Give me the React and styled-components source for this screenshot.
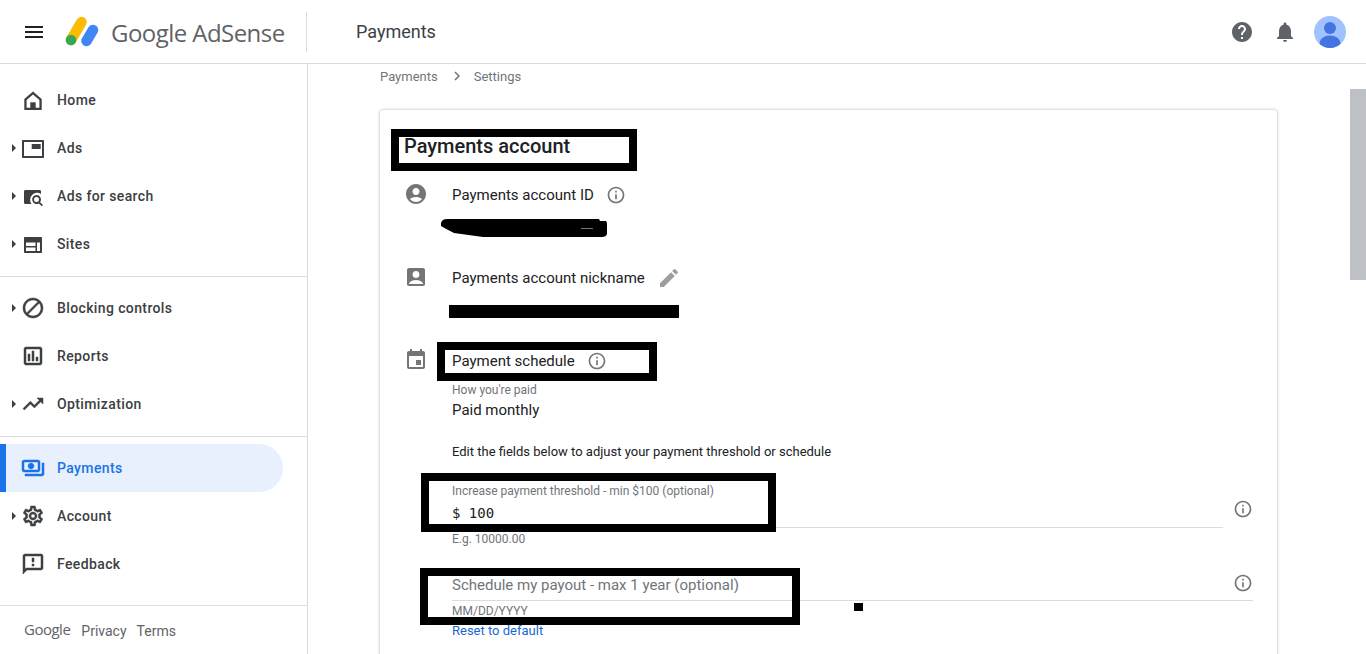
import React from 'react';
import styled, { createGlobalStyle } from 'styled-components';
import {
  MdMenu, MdBlock, MdOutlineAssessment, MdTrendingUp,
  MdOutlinePayments, MdOutlineSettings, MdOutlineFeedback, MdAccountCircle, MdAccountBox, MdEdit,
  MdEvent, MdInfoOutline, MdHelp, MdNotifications, MdChevronRight,
} from 'react-icons/md';

const GlobalStyle = createGlobalStyle`
  html, body {
    margin: 0;
    height: 100%;
    overflow: hidden;
    background: #fff;
    font-family: Roboto, 'Liberation Sans', sans-serif;
  }
`;

const Page = styled.div`
  position: relative;
  height: 100vh;
  display: flex;
  flex-direction: column;
  overflow: hidden;
`;

const Header = styled.header`
  flex: none;
  height: 64px;
  box-sizing: border-box;
  border-bottom: 1px solid #dadce0;
  display: flex;
  align-items: center;
  padding-right: 20px;
`;

const MenuButton = styled.div`
  display: flex;
  margin-left: 22px;
  color: #202124;
`;

const Brand = styled.div`
  width: 243px;
  height: 40px;
  margin-left: 18px;
  box-sizing: border-box;
  border-right: 1px solid #dadce0;
  display: flex;
  align-items: center;
  gap: 11px;
`;

const BrandText = styled.span`
  margin-top: 1px;
  font-family: 'Open Sans', Roboto, sans-serif;
  font-size: 24px;
  color: #5f6368;
  letter-spacing: -0.55px;
  white-space: nowrap;
`;

const PageTitle = styled.div`
  flex: 1;
  margin-left: 49px;
  font-size: 18px;
  color: #3c4043;
`;

const HeaderActions = styled.div`
  display: flex;
  align-items: center;
  color: #5f6368;
  gap: 19px;
`;

const Avatar = styled.svg`
  width: 32px;
  height: 32px;
  margin-left: -2px;
`;

const Body = styled.div`
  flex: 1;
  display: flex;
  min-height: 0;
`;

const Sidebar = styled.nav`
  flex: none;
  width: 308px;
  box-sizing: border-box;
  border-right: 1px solid #dadce0;
  display: flex;
  flex-direction: column;
`;

const NavGroup = styled.div`
  padding: ${p => p.$top}px 0 ${p => p.$bottom}px;
  border-bottom: 1px solid #dadce0;
`;

const NavItem = styled.div`
  position: relative;
  width: 283px;
  height: 48px;
  box-sizing: border-box;
  display: flex;
  align-items: center;
  gap: 12px;
  padding-left: ${p => (p.$active ? 15 : 21)}px;
  border-left: ${p => (p.$active ? '6px solid #1a73e8' : 'none')};
  border-radius: 0 24px 24px 0;
  background: ${p => (p.$active ? '#e8f0fe' : 'transparent')};
  color: ${p => (p.$active ? '#1a73e8' : '#3c4043')};
  font-size: 14px;
  font-weight: 500;
  letter-spacing: 0.38px;
`;

// the reference icons are a little heavier than the stock material ones
const BoldIcon = styled.span`
  display: flex;
  svg path:not([fill='none']) {
    stroke: currentColor;
    stroke-width: 0.5px;
  }
`;

const Caret = styled.span`
  position: absolute;
  left: 12px;
  top: 50%;
  margin-top: -4px;
  border-left: 4px solid #3c4043;
  border-top: 4px solid transparent;
  border-bottom: 4px solid transparent;
`;

const SideFooter = styled.div`
  display: flex;
  align-items: center;
  padding: 17px 0 0 24px;
  color: #5f6368;
  font-size: 14px;
`;

const FooterLogo = styled.span`
  font-family: 'Open Sans', Roboto, sans-serif;
  font-size: 15px;
  letter-spacing: -0.5px;
  margin: -5px 11px 0 0;
`;

const FooterLink = styled.span`
  margin-right: 10px;
`;

const Main = styled.main`
  flex: 1;
  min-width: 0;
  padding: 2px 0 0 72px;
`;

const Breadcrumb = styled.div`
  height: 20px;
  display: flex;
  align-items: center;
  font-size: 13px;
  color: #70757a;
  gap: 10px;
  svg {
    margin-right: -2px;
  }
`;

const Card = styled.section`
  width: 897px;
  height: 700px;
  margin-top: 24px;
  box-sizing: border-box;
  border-radius: 3px;
  box-shadow: 0 0 3px rgba(60, 64, 67, 0.45);
  padding: 22px 0 0 24px;
`;

const CardTitle = styled.h2`
  margin: 0;
  font-size: 20px;
  line-height: 28px;
  font-weight: 500;
  color: #202124;
`;

const Section = styled.div`
  display: grid;
  grid-template-columns: 48px 1fr;
  margin-top: ${p => p.$top}px;
`;

const SectionIcon = styled.div`
  display: flex;
  color: #757575;
`;

const SectionHead = styled.div`
  height: 24px;
  box-sizing: border-box;
  padding-top: 1px;
  display: flex;
  align-items: center;
  gap: 12px;
  font-size: 15px;
  color: #202124;
`;

const InfoIcon = styled(MdInfoOutline)`
  flex: none;
  color: #757575;
`;

const EditIcon = styled(MdEdit)`
  flex: none;
  color: #9e9e9e;
`;

const Redacted = styled.svg`
  display: block;
  margin: ${p => p.$top}px 0 0 ${p => p.$left}px;
`;

const HiddenBar = styled.div`
  width: 230px;
  height: 13px;
  margin: 16px 0 0 -3px;
  background: #000;
`;

const SmallLabel = styled.div`
  margin-top: ${p => p.$top}px;
  font-size: 12px;
  line-height: 16px;
  color: #70757a;
`;

const BodyText = styled.div`
  margin-top: ${p => p.$top}px;
  font-size: ${p => p.$size}px;
  line-height: 20px;
  color: #202124;
`;

const FieldRow = styled.div`
  display: flex;
  align-items: flex-end;
  gap: 10px;
  margin-top: ${p => p.$top}px;
`;

const Field = styled.div`
  width: 771px;
  padding-bottom: 4px;
  border-bottom: 1px solid #dadce0;
`;

const AmountInput = styled.div`
  margin-top: 4px;
  font-family: 'DejaVu Sans Mono', monospace;
  font-size: 14px;
  line-height: 20px;
  color: #202124;
`;

const InfoSlot = styled.div`
  display: flex;
  margin-bottom: 9px;
`;

const PayoutField = styled.div`
  width: 801px;
  margin-top: 28px;
  height: 26px;
  box-sizing: border-box;
  border-bottom: 1px solid #dadce0;
  display: flex;
  justify-content: space-between;
`;

const PayoutLabel = styled.span`
  font-size: 15px;
  line-height: 20px;
  color: #70757a;
`;

const PayoutInfo = styled.div`
  display: flex;
  margin-top: -2px;
`;

const ResetLink = styled.a`
  display: block;
  margin-top: 4px;
  font-size: 13px;
  line-height: 16px;
  color: #1a67d2;
`;

// marker boxes someone drew on top of the screenshot
const Marker = styled.div`
  position: absolute;
  left: ${p => p.$x}px;
  top: ${p => p.$y}px;
  width: ${p => p.$w}px;
  height: ${p => p.$h}px;
  box-sizing: border-box;
  border: 8px solid #000;
  pointer-events: none;
`;

const Speck = styled.div`
  position: absolute;
  left: 854px;
  top: 603px;
  width: 9px;
  height: 8px;
  background: #000;
`;

const ScrollThumb = styled.div`
  position: absolute;
  right: 0;
  top: 89px;
  width: 16px;
  height: 191px;
  background: #bdc1c6;
`;

const HomeIcon = () => (
  <svg width="24" height="24" viewBox="0 0 24 24" fill="currentColor">
    <path fillRule="evenodd" d="M12 3.500l8.700 7.500V22H3.300V11L12 3.500zm0 3.100l-6.400 5.500V19.800h12.800v-7.700L12 6.600z" />
    <path d="M9.300 14.300h5.400V20H9.300z" />
  </svg>
);

const AdsIcon = () => (
  <svg width="24" height="24" viewBox="0 0 24 24" fill="currentColor">
    <path fillRule="evenodd" d="M2 4h20c.6 0 1 .4 1 1v16c0 .6-.4 1-1 1H2c-.6 0-1-.4-1-1V5c0-.6.4-1 1-1zm1 2v14h18V6H3z" />
    <path d="M10.700 8h9v5h-9z" />
  </svg>
);

const SearchAdsIcon = () => (
  <svg width="24" height="24" viewBox="0 0 24 24" fill="currentColor">
    <path d="M4.500 6h14c1 0 1.500.7 1.500 1.500V10a7 7 0 0 0-9.500 10H4.500C3.500 20 3 19.300 3 18.500v-11C3 6.700 3.500 6 4.500 6z" />
    <path fillRule="evenodd" d="M15.500 11a4.500 4.500 0 0 1 3.600 7.200l2.900 2.900-1.200 1.200-2.900-2.900a4.500 4.500 0 1 1-2.400-8.400zm0 2a2.500 2.500 0 1 0 0 5 2.500 2.500 0 0 0 0-5z" />
  </svg>
);

const SitesIcon = () => (
  <svg width="24" height="24" viewBox="0 0 24 24" fill="currentColor">
    <path fillRule="evenodd" d="M4 5h16c.6 0 1 .4 1 1v14c0 .6-.4 1-1 1H4c-.6 0-1-.4-1-1V6c0-.6.4-1 1-1zm1 5.500V14h9.500v-3.500H5zm0 5V19h9.500v-3.500H5zm11-5V19h3v-8.500h-3z" />
  </svg>
);

const navTop = [
  { label: 'Home', icon: <HomeIcon /> },
  { label: 'Ads', icon: <AdsIcon />, caret: true },
  { label: 'Ads for search', icon: <SearchAdsIcon />, caret: true },
  { label: 'Sites', icon: <SitesIcon />, caret: true },
];

const navMiddle = [
  { label: 'Blocking controls', icon: <BoldIcon><MdBlock size={24} /></BoldIcon>, caret: true },
  { label: 'Reports', icon: <BoldIcon><MdOutlineAssessment size={24} /></BoldIcon> },
  { label: 'Optimization', icon: <BoldIcon><MdTrendingUp size={24} /></BoldIcon>, caret: true },
];

const navBottom = [
  { label: 'Payments', icon: <BoldIcon><MdOutlinePayments size={24} /></BoldIcon>, active: true },
  { label: 'Account', icon: <BoldIcon><MdOutlineSettings size={24} /></BoldIcon>, caret: true },
  { label: 'Feedback', icon: <BoldIcon><MdOutlineFeedback size={24} /></BoldIcon> },
];

const renderNav = items =>
  items.map(item => (
    <NavItem key={item.label} $active={item.active}>
      {item.caret && <Caret />}
      {item.icon}
      {item.label}
    </NavItem>
  ));

export default function App() {
  return (
    <Page>
      <GlobalStyle />
      <Header>
        <MenuButton><MdMenu size={24} /></MenuButton>
        <Brand>
          <svg width="36" height="36" viewBox="0 0 36 36">
            <line x1="17.500" y1="8" x2="7" y2="26" stroke="#fbbc04" strokeWidth="10.500" strokeLinecap="round" />
            <line x1="29" y1="16" x2="22.500" y2="27" stroke="#4285f4" strokeWidth="10.500" strokeLinecap="round" />
            <circle cx="7" cy="26" r="5.300" fill="#34a853" />
          </svg>
          <BrandText>Google AdSense</BrandText>
        </Brand>
        <PageTitle>Payments</PageTitle>
        <HeaderActions>
          <MdHelp size={24} />
          <MdNotifications size={24} />
          <Avatar viewBox="0 0 32 32">
            <defs>
              <clipPath id="avatar-clip"><circle cx="16" cy="16" r="16" /></clipPath>
            </defs>
            <circle cx="16" cy="16" r="16" fill="#a0c3ff" />
            <g clipPath="url(#avatar-clip)" fill="#4374e0">
              <circle cx="16" cy="12" r="6" />
              <ellipse cx="16" cy="27" rx="10.500" ry="7.500" />
            </g>
          </Avatar>
        </HeaderActions>
      </Header>
      <Body>
        <Sidebar>
          <NavGroup $top={12} $bottom={8}>{renderNav(navTop)}</NavGroup>
          <NavGroup $top={7} $bottom={8}>{renderNav(navMiddle)}</NavGroup>
          <NavGroup $top={7} $bottom={17}>{renderNav(navBottom)}</NavGroup>
          <SideFooter>
            <FooterLogo>Google</FooterLogo>
            <FooterLink>Privacy</FooterLink>
            <FooterLink>Terms</FooterLink>
          </SideFooter>
        </Sidebar>
        <Main>
          <Breadcrumb>
            Payments
            <MdChevronRight size={18} />
            Settings
          </Breadcrumb>
          <Card>
            <CardTitle>Payments account</CardTitle>
            <Section $top={22}>
              <SectionIcon><MdAccountCircle size={24} /></SectionIcon>
              <div>
                <SectionHead>Payments account ID <InfoIcon size={20} /></SectionHead>
                <Redacted $top={11} $left={-12} width="168" height="21" viewBox="0 0 168 21">
                  <path d="M1 6Q2 2 7 2L159 2L160 4L166 4Q167 5 167 7L167 17Q166 20 162 20L43 20L14 16Q6 12 1 9Z" fill="#000" />
                  <rect x="141" y="11" width="12" height="1" fill="#777" />
                </Redacted>
              </div>
            </Section>
            <Section $top={27}>
              <SectionIcon><MdAccountBox size={24} /></SectionIcon>
              <div>
                <SectionHead>Payments account nickname <EditIcon size={24} /></SectionHead>
                <HiddenBar />
              </div>
            </Section>
            <Section $top={30}>
              <SectionIcon><MdEvent size={24} /></SectionIcon>
              <div>
                <SectionHead>Payment schedule <InfoIcon size={20} /></SectionHead>
                <SmallLabel $top={10}>How you're paid</SmallLabel>
                <BodyText $top={2} $size={15}>Paid monthly</BodyText>
                <BodyText $top={22} $size={13}>Edit the fields below to adjust your payment threshold or schedule</BodyText>
                <FieldRow $top={21}>
                  <Field>
                    <SmallLabel $top={0}>Increase payment threshold - min $100 (optional)</SmallLabel>
                    <AmountInput>$ 100</AmountInput>
                  </Field>
                  <InfoSlot><InfoIcon size={20} /></InfoSlot>
                </FieldRow>
                <SmallLabel $top={3}>E.g. 10000.00</SmallLabel>
                <PayoutField>
                  <PayoutLabel>Schedule my payout - max 1 year (optional)</PayoutLabel>
                  <PayoutInfo><InfoIcon size={20} /></PayoutInfo>
                </PayoutField>
                <SmallLabel $top={2}>MM/DD/YYYY</SmallLabel>
                <ResetLink>Reset to default</ResetLink>
              </div>
            </Section>
          </Card>
        </Main>
      </Body>
      <Marker $x={391} $y={129} $w={246} $h={42} />
      <Marker $x={437} $y={342} $w={220} $h={39} />
      <Marker $x={421} $y={473} $w={355} $h={59} />
      <Marker $x={420} $y={568} $w={380} $h={57} />
      <Speck />
      <ScrollThumb />
    </Page>
  );
}
